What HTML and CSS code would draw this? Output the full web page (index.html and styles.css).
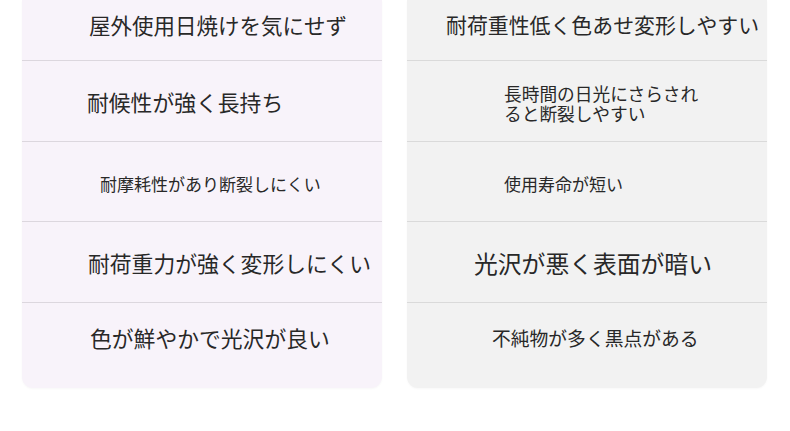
FILE: index.html
```html
<!DOCTYPE html>
<html lang="ja">
<head>
<meta charset="utf-8">
<link rel="stylesheet" href="styles.css">
</head>
<body>
<div class="cards">
  <div class="card card-good">
    <div class="row row-first"><span class="t t21 l1">屋外使用日焼けを気にせず</span></div>
    <div class="row"><span class="t t22 l2">耐候性が強く長持ち</span></div>
    <div class="row row-low"><span class="t t17 l3">耐摩耗性があり断裂しにくい</span></div>
    <div class="row"><span class="t t22 l4">耐荷重力が強く変形しにくい</span></div>
    <div class="row row-last"><span class="t t22 l5">色が鮮やかで光沢が良い</span></div>
  </div>
  <div class="card card-bad">
    <div class="row row-first"><span class="t t21r r1">耐荷重性低く色あせ変形しやすい</span></div>
    <div class="row"><span class="t t18 two r2">長時間の日光にさらされ<br>ると断裂しやすい</span></div>
    <div class="row row-low"><span class="t t17 r3">使用寿命が短い</span></div>
    <div class="row"><span class="t t24 r4">光沢が悪く表面が暗い</span></div>
    <div class="row row-last"><span class="t t19 r5">不純物が多く黒点がある</span></div>
  </div>
</div>
</body>
</html>
```

FILE: styles.css
```css
html, body {
  margin: 0;
  padding: 0;
  background: #ffffff;
}
body {
  width: 790px;
  height: 431px;
  overflow: hidden;
  font-family: "Noto Sans CJK JP", "Noto Sans", sans-serif;
  color: #282828;
}
.cards {
  display: grid;
  grid-template-columns: 360px 360px;
  column-gap: 25px;
  padding-left: 22px;
}
.card {
  display: flex;
  flex-direction: column;
  border-radius: 0 0 11px 11px;
  padding-bottom: 15px;
  box-shadow: 0 1px 2px rgba(0, 0, 0, 0.03);
}
.card-good {
  background: #f8f3fa;
}
.card-good .row + .row {
  border-top: 1px solid #dcd7de;
}
.card-bad {
  background: #f2f2f2;
}
.card-bad .row + .row {
  border-top: 1px solid #dadada;
}
.row {
  display: flex;
  align-items: center;
  padding-top: 3px;
  height: 77px;
}
.row-first {
  height: 50px;
  padding-top: 0;
  padding-bottom: 10px;
}
.row-low {
  padding-top: 6px;
  height: 73px;
}
.row-last {
  height: 70px;
  padding-top: 0;
}
.t {
  white-space: nowrap;
  line-height: 1.3;
}
.two {
  line-height: 20px;
}
.t17 { font-size: 17px; }
.t18 { font-size: 17.7px; }
.t19 { font-size: 18.8px; }
.t21 { font-size: 21.5px; }
.t21r { font-size: 20.9px; }
.t22 { font-size: 21.8px; }
.t24 { font-size: 23.8px; }

.l1 { margin-left: 67px; }
.l2 { margin-left: 65px; }
.l3 { margin-left: 78px; }
.l4 { margin-left: 66px; }
.l5 { margin-left: 68px; }
.r1 { margin-left: 39px; }
.r2 { margin-left: 97px; }
.r3 { margin-left: 97px; }
.r4 { margin-left: 67px; }
.r5 { margin-left: 85px; }
```
